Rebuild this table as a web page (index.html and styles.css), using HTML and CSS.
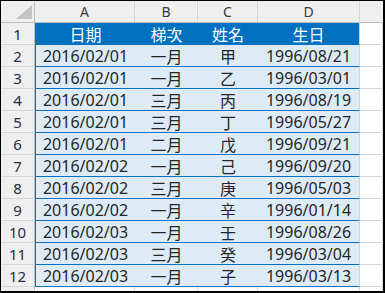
FILE: index.html
```html
<!DOCTYPE html>
<html>
<head>
<meta charset="utf-8">
<link rel="stylesheet" href="styles.css">
</head>
<body>
<div class="frame">
  <div class="sheet">
    <div class="corner"><svg class="tri" width="16" height="14" viewBox="0 0 16 14"><polygon points="0,14 16,14 16,0" fill="#c4c4c4"/></svg></div>
    <div class="colhdr">A</div>
    <div class="colhdr">B</div>
    <div class="colhdr">C</div>
    <div class="colhdr">D</div>
    <div class="colhdr last"></div>

    <div class="rowhdr">1</div>
    <div class="cell th first">日期</div>
    <div class="cell th">梯次</div>
    <div class="cell th">姓名</div>
    <div class="cell th lastdata">生日</div>
    <div class="empty"></div>

    <div class="rowhdr">2</div>
    <div class="cell first">2016/02/01</div><div class="cell">一月</div><div class="cell">甲</div><div class="cell lastdata">1996/08/21</div><div class="empty"></div>
    <div class="rowhdr">3</div>
    <div class="cell first">2016/02/01</div><div class="cell">一月</div><div class="cell">乙</div><div class="cell lastdata">1996/03/01</div><div class="empty"></div>
    <div class="rowhdr">4</div>
    <div class="cell first">2016/02/01</div><div class="cell">三月</div><div class="cell">丙</div><div class="cell lastdata">1996/08/19</div><div class="empty"></div>
    <div class="rowhdr">5</div>
    <div class="cell first">2016/02/01</div><div class="cell">三月</div><div class="cell">丁</div><div class="cell lastdata">1996/05/27</div><div class="empty"></div>
    <div class="rowhdr">6</div>
    <div class="cell first">2016/02/01</div><div class="cell">二月</div><div class="cell">戊</div><div class="cell lastdata">1996/09/21</div><div class="empty"></div>
    <div class="rowhdr">7</div>
    <div class="cell first">2016/02/02</div><div class="cell">一月</div><div class="cell">己</div><div class="cell lastdata">1996/09/20</div><div class="empty"></div>
    <div class="rowhdr">8</div>
    <div class="cell first">2016/02/02</div><div class="cell">三月</div><div class="cell">庚</div><div class="cell lastdata">1996/05/03</div><div class="empty"></div>
    <div class="rowhdr">9</div>
    <div class="cell first">2016/02/02</div><div class="cell">一月</div><div class="cell">辛</div><div class="cell lastdata">1996/01/14</div><div class="empty"></div>
    <div class="rowhdr">10</div>
    <div class="cell first">2016/02/03</div><div class="cell">一月</div><div class="cell">壬</div><div class="cell lastdata">1996/08/26</div><div class="empty"></div>
    <div class="rowhdr">11</div>
    <div class="cell first">2016/02/03</div><div class="cell">三月</div><div class="cell">癸</div><div class="cell lastdata">1996/03/04</div><div class="empty"></div>
    <div class="rowhdr">12</div>
    <div class="cell first">2016/02/03</div><div class="cell">一月</div><div class="cell">子</div><div class="cell lastdata">1996/03/13</div><div class="empty"></div>

    <div class="rowhdr"></div>
    <div class="empty"></div><div class="empty"></div><div class="empty"></div><div class="empty"></div><div class="empty"></div>
  </div>
</div>
</body>
</html>
```
FILE: styles.css
```css
* { box-sizing: border-box; }
html, body { margin: 0; padding: 0; background: #fff; }
.frame {
  width: 385px;
  height: 293px;
  border-top: 1px solid #000;
  border-left: 1px solid #000;
  border-right: 2px solid #000;
  border-bottom: 2px solid #000;
  overflow: hidden;
  background: #fff;
}
.sheet {
  display: grid;
  grid-template-columns: 34px 100px 63px 60px 102px 1fr;
  grid-auto-rows: 22px;
  font-family: "Noto Sans", "Noto Sans CJK TC", sans-serif;
}
.corner, .colhdr, .rowhdr {
  background: #efefef;
  color: #333;
  display: flex;
  align-items: center;
  justify-content: center;
  border-right: 1px solid #d4d4d4;
  border-bottom: 1px solid #d4d4d4;
}
.corner {
  border-right-color: #bdbdbd;
  border-bottom-color: #bdbdbd;
  position: relative;
}
.tri { position: absolute; right: 2px; bottom: 3px; }
.colhdr {
  font-size: 14px;
  border-bottom-color: #bdbdbd;
  color: #3a3a3a;
}
.colhdr.last { border-right: none; }
.rowhdr {
  font-size: 15px;
  border-right-color: #bdbdbd;
  color: #2b2b3a;
}
.cell {
  background: #ddebf7;
  color: #262626;
  font-size: 16px;
  display: flex;
  align-items: center;
  justify-content: center;
  border-bottom: 1px solid #0070c0;
  padding-top: 1px;
}
.cell.first { border-left: 1px solid #0070c0; }
.cell.lastdata { border-right: 1px solid #d4d4d4; }
.cell.th {
  background: #0070c0;
  color: #fff;
}
.empty {
  background: #fff;
  border-bottom: 1px solid #d4d4d4;
  border-right: 1px solid #d4d4d4;
}
```
